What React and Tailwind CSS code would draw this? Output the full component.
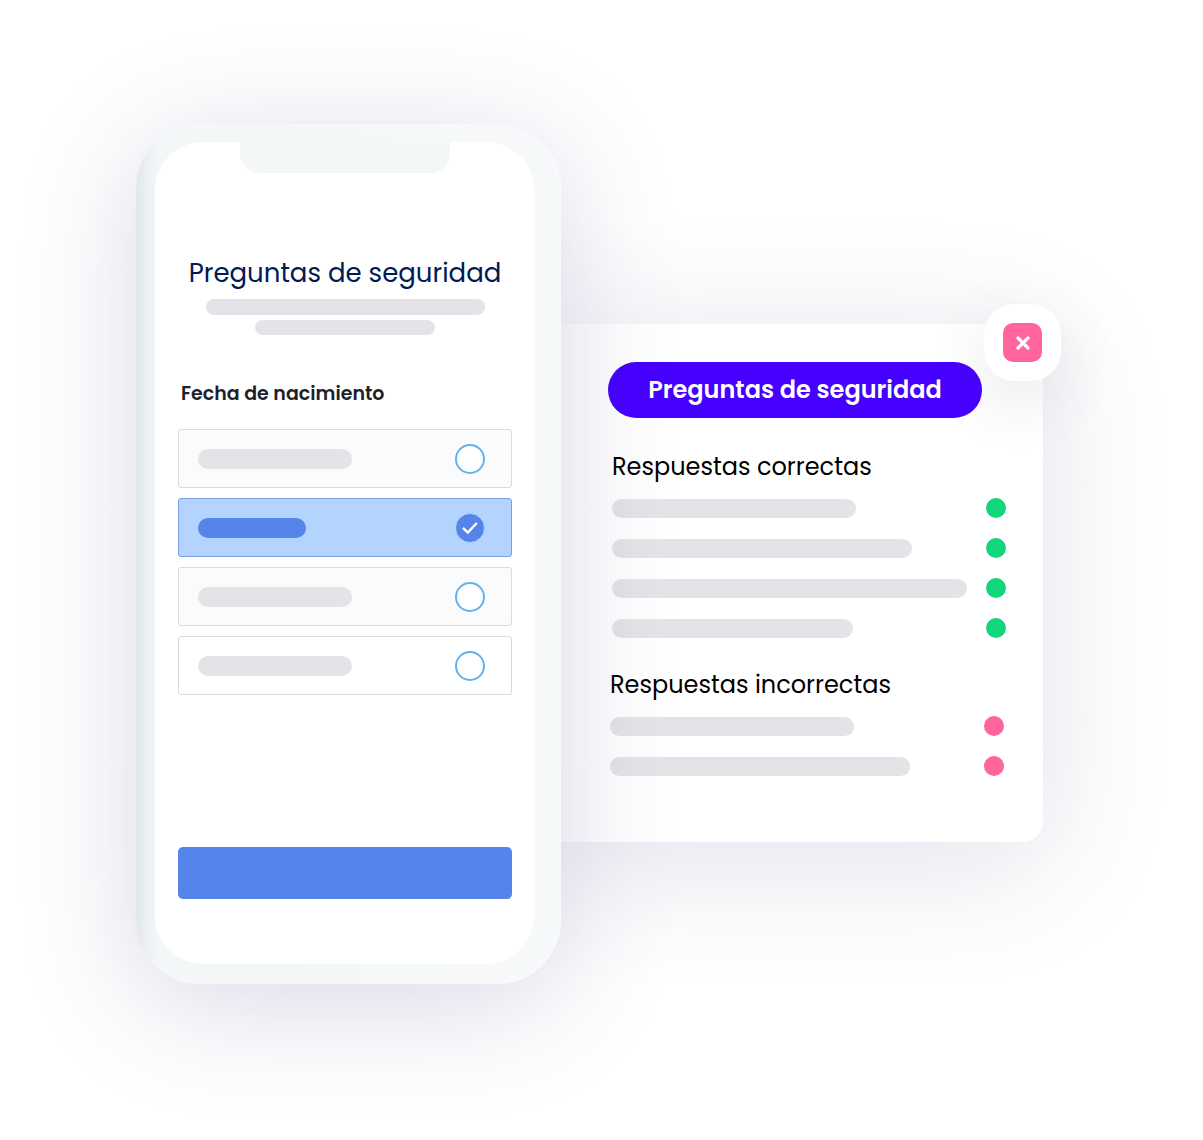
import { useState } from "react";

const OPTIONS = [
  { id: "opcion-1", label: "Opción 1", bar: "w-[154px]", bg: "bg-[#fbfbfc]" },
  { id: "opcion-2", label: "Opción 2", bar: "w-[108px]", bg: "bg-[#fbfbfc]" },
  { id: "opcion-3", label: "Opción 3", bar: "w-[154px]", bg: "bg-[#fbfbfc]" },
  { id: "opcion-4", label: "Opción 4", bar: "w-[154px]", bg: "bg-white" },
];

const CORRECT = ["w-[244px]", "w-[300px]", "w-[355px]", "w-[241px]"];
const INCORRECT = ["w-[244px]", "w-[300px]"];

function Option({ option, checked, onSelect }) {
  return (
    <label
      htmlFor={option.id}
      className={`flex h-[59px] items-center justify-between rounded-[3px] border pl-[19px] pr-[26px] ${
        checked
          ? "border-[#7c9eea] bg-[#b2d4ff]"
          : `border-[#d9dcdf] ${option.bg}`
      }`}
    >
      <span
        className={`h-5 rounded-full ${option.bar} ${
          checked ? "bg-[#5584ea]" : "bg-[#e4e4e8]"
        }`}
      />
      <span className="grid place-items-center">
        <input
          id={option.id}
          type="radio"
          name="fecha"
          aria-label={option.label}
          checked={checked}
          onChange={onSelect}
          className="col-start-1 row-start-1 size-[30px] appearance-none rounded-full border-2 border-[#62b2ee] bg-white checked:border checked:border-[#b2d4ff] checked:bg-[#5584ea]"
        />
        {checked && (
          <svg viewBox="0 0 16 16" className="pointer-events-none col-start-1 row-start-1 size-4" aria-hidden="true">
            <path d="M1 7.8 5.8 12.6 14.8 3" fill="none" stroke="#fff" strokeWidth="2.4" />
          </svg>
        )}
      </span>
    </label>
  );
}

function AnswerList({ title, bars, dot, className }) {
  return (
    <section className={className}>
      <h3 className="mb-[15px] text-2xl leading-8 text-black">{title}</h3>
      <ul className="flex flex-col gap-5">
        {bars.map((width, i) => (
          <li key={i} className="flex h-5 items-center justify-between">
            <span className={`h-[19px] rounded-full bg-[#e4e4e8] ${width}`} />
            <span className={`size-5 rounded-full ${dot}`} />
          </li>
        ))}
      </ul>
    </section>
  );
}

export default function App() {
  const [selected, setSelected] = useState("opcion-2");

  return (
    <main className="flex min-h-screen items-center justify-center bg-white pb-8 pr-6 font-['Poppins','Inter',sans-serif]">
      <div className="flex items-start">
        {/* phone */}
        <div className="z-10 w-[425px] shrink-0 rounded-[64px] bg-linear-to-r from-[#e2e7ea] via-[#f3f7f8] via-5% to-[#f7f9fa] pb-5 pl-[19px] pr-[27px] pt-[18px] shadow-[0_20px_120px_rgba(70,55,130,0.2)]">
          <div className="rounded-[48px] bg-white pb-[65px] pl-[23px] pr-[22px]">
            <div className="mx-auto h-[31px] w-[210px] rounded-b-[20px] bg-[#f3f7f8]" />
            <h1 className="mt-[84px] whitespace-nowrap text-center text-[26px] leading-8 text-[#001a57]">
              Preguntas de seguridad
            </h1>
            <div className="mt-[10px] flex flex-col items-center gap-[5px]">
              <span className="h-4 w-[279px] rounded-full bg-[#e4e4e8]" />
              <span className="h-[15px] w-[180px] rounded-full bg-[#e4e4e8]" />
            </div>
            <fieldset className="mt-[47px]">
              <legend className="mb-[23px] px-[3px] text-[19px] font-semibold leading-6 text-[#1f1f2b]">
                Fecha de nacimiento
              </legend>
              <div className="flex flex-col gap-[10px]">
                {OPTIONS.map((option) => (
                  <Option
                    key={option.id}
                    option={option}
                    checked={selected === option.id}
                    onSelect={() => setSelected(option.id)}
                  />
                ))}
              </div>
            </fieldset>
            <button
              type="button"
              aria-label="Continuar"
              className="mt-[152px] block h-[52px] w-full rounded-[5px] bg-[#5584ea]"
            />
          </div>
        </div>

        {/* results */}
        <div className="relative mt-50 w-[482px] rounded-r-[20px] bg-white pb-[66px] pt-[38px] shadow-[0_20px_130px_rgba(70,70,130,0.16)]">
          <h2 className="ml-[47px] flex h-14 w-[374px] items-center justify-center whitespace-nowrap rounded-full bg-[#4600ff] text-2xl font-semibold text-white">
            Preguntas de seguridad
          </h2>
          <AnswerList
            title="Respuestas correctas"
            bars={CORRECT}
            dot="bg-[#14d67c]"
            className="mt-[33px] pl-[51px] pr-[37px]"
          />
          <AnswerList
            title="Respuestas incorrectas"
            bars={INCORRECT}
            dot="bg-[#ff659c]"
            className="mt-[31px] pl-[49px] pr-[39px]"
          />
          <button
            type="button"
            aria-label="Cerrar"
            className="absolute -right-[18px] -top-5 grid size-[77px] place-items-center rounded-[30px] bg-white shadow-[0_20px_60px_rgba(70,70,110,0.12)]"
          >
            <span className="grid size-[39px] place-items-center rounded-[10px] bg-[#ff659c]">
              <svg viewBox="0 0 14 14" className="size-[14px]" aria-hidden="true">
                <path d="M2 2 12 12M12 2 2 12" stroke="#fff" strokeWidth="3.2" strokeLinecap="round" />
              </svg>
            </span>
          </button>
        </div>
      </div>
    </main>
  );
}
